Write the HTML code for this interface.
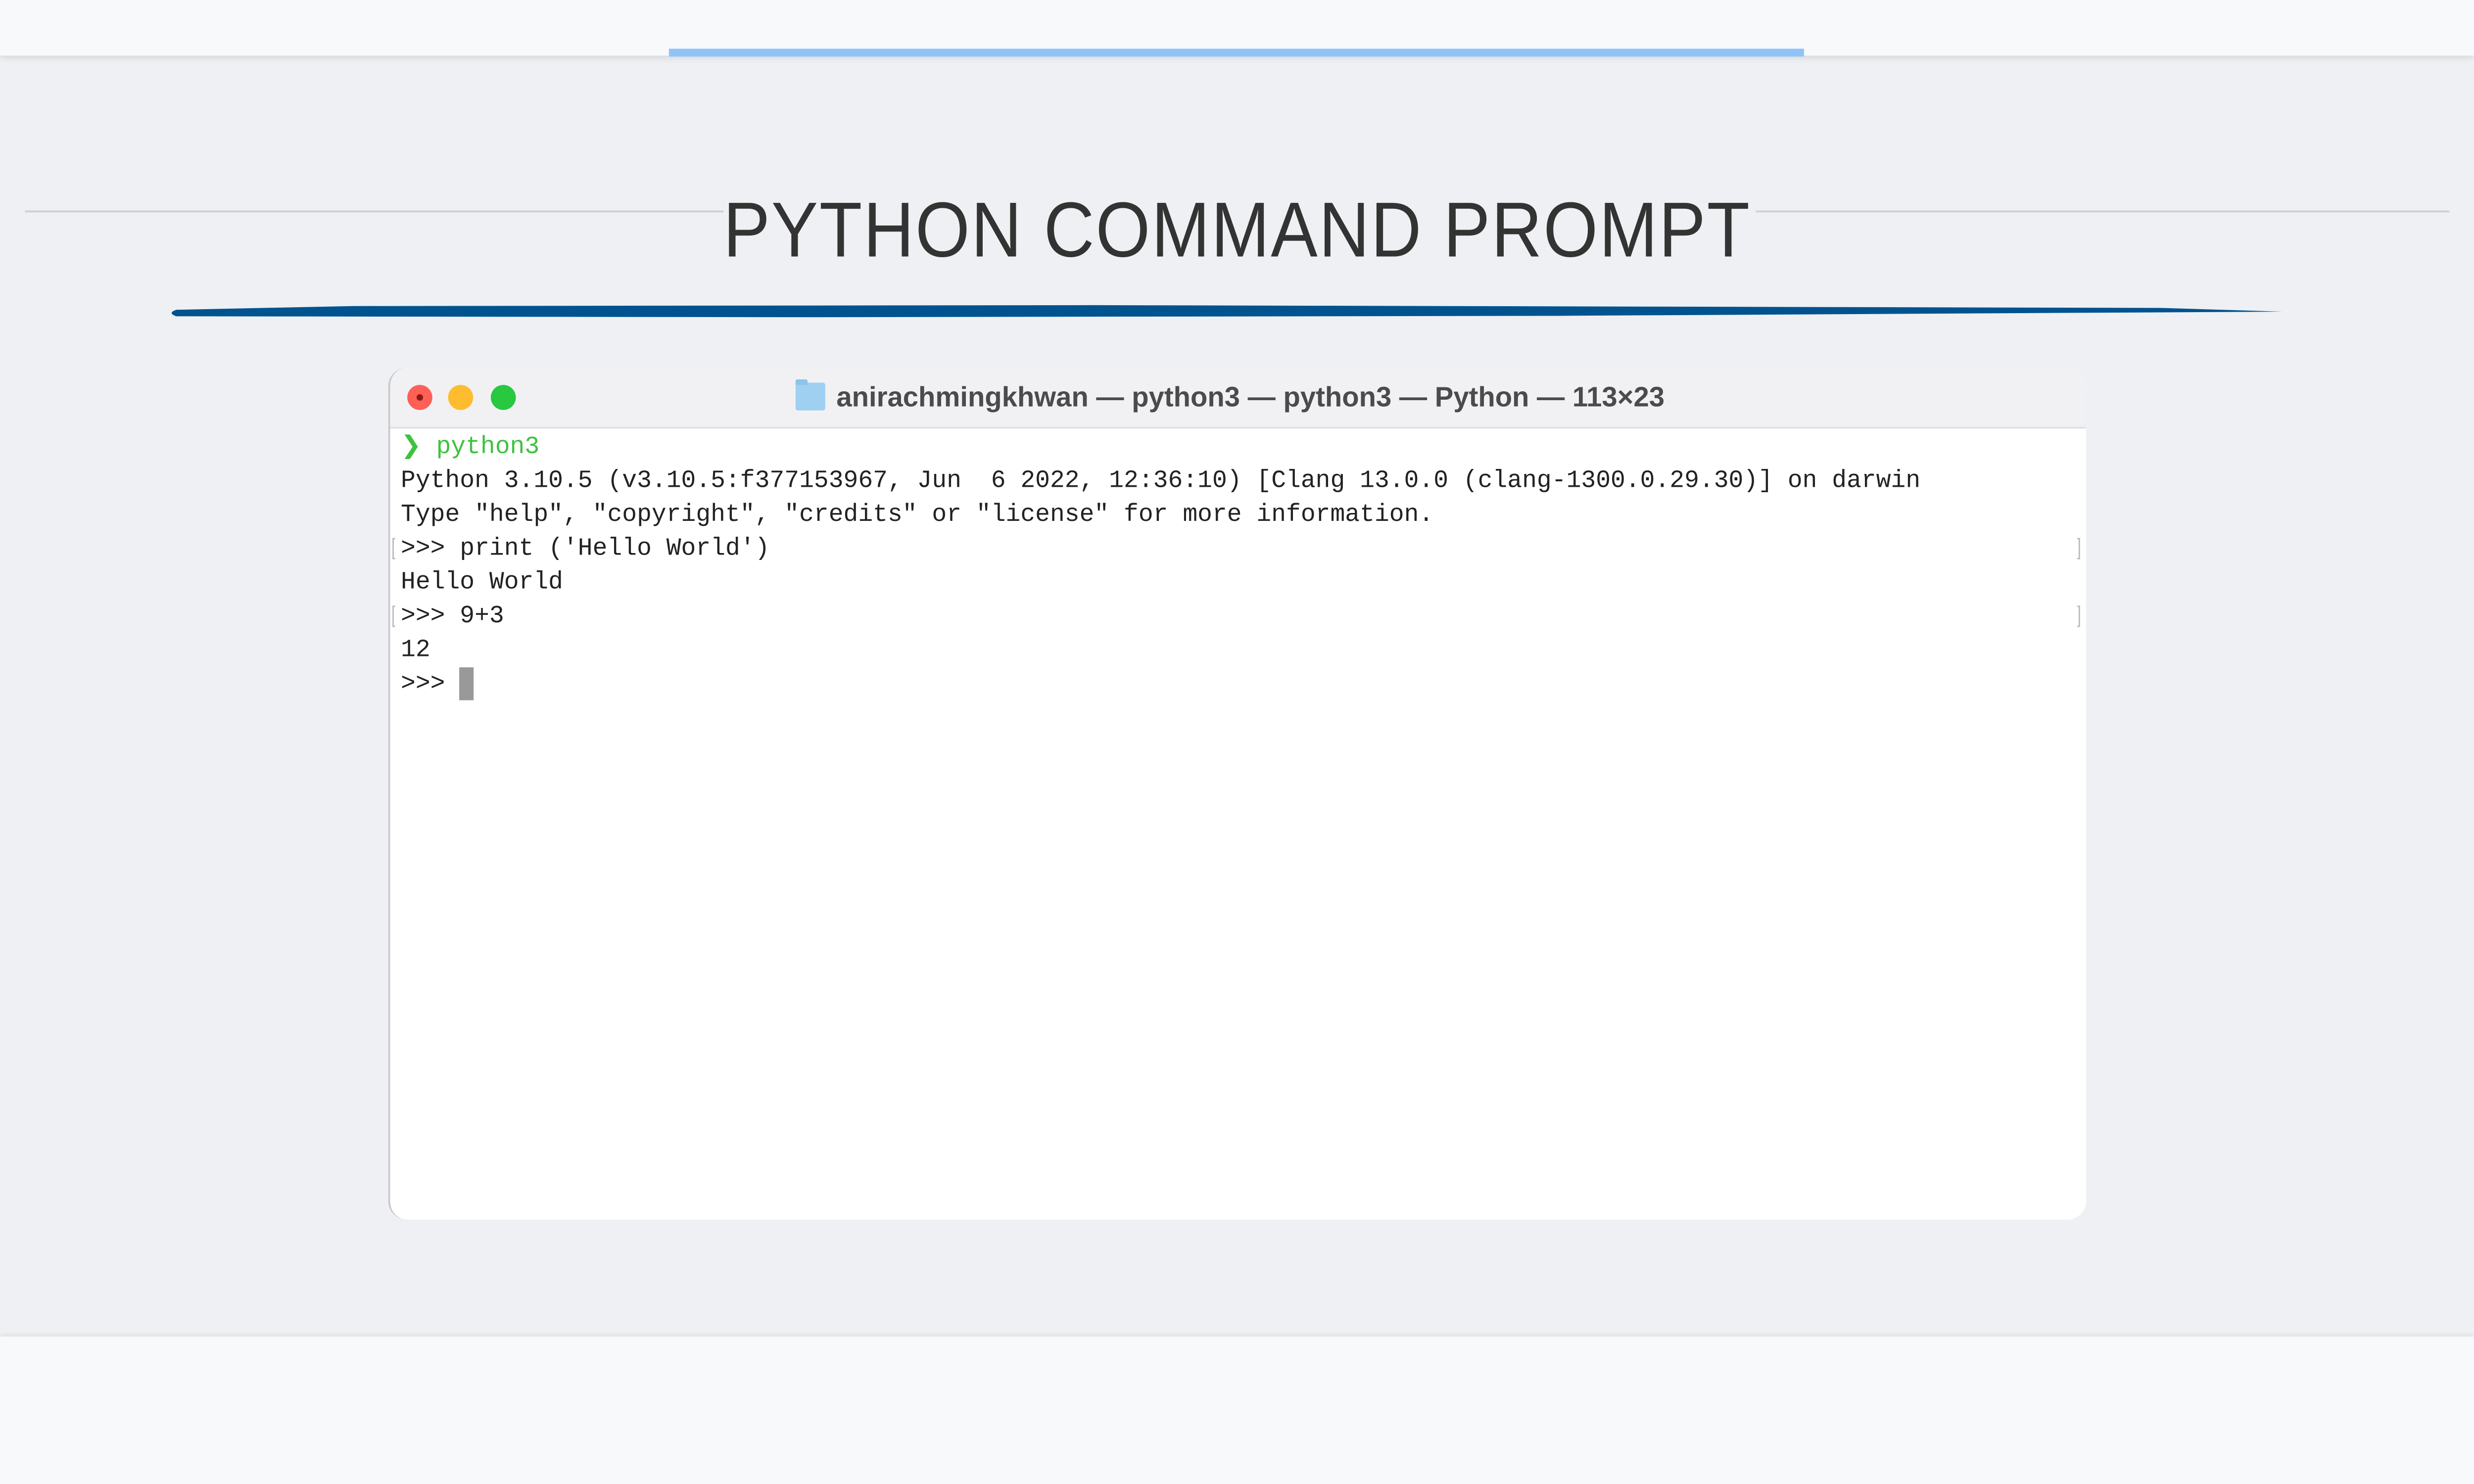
<!DOCTYPE html>
<html><head><meta charset="utf-8"><style>
html,body{margin:0;padding:0;width:5000px;height:3000px;overflow:hidden;background:#f8f9fa}
#w{position:absolute;left:0;top:0;width:5334px;height:3200px;background:#eef0f3;overflow:hidden;transform:scale(0.9375);transform-origin:0 0;font-family:"Liberation Sans",sans-serif}
.top{position:absolute;left:0;top:0;width:5334px;height:120px;background:#f8f9fa;box-shadow:0 4px 14px rgba(0,0,0,0.12)}
.blue{position:absolute;left:1442px;top:105px;width:2447px;height:17px;background:#90c4f8}
.bot{position:absolute;left:0;top:2882px;width:5334px;height:318px;background:#f8f9fa;box-shadow:0 -3px 10px rgba(0,0,0,0.08)}
.hline{position:absolute;left:54px;top:454px;width:5226px;height:4px;background:#cfcfd1}
.tbg{position:absolute;left:1560px;top:400px;width:2225px;height:200px;background:#eef0f3}
.title{position:absolute;left:0;width:5334px;top:395px;text-align:center;white-space:nowrap;line-height:200px;height:200px}
.title span{display:inline-block;font-size:168px;color:#333;letter-spacing:3px;transform:scaleX(0.9);transform-origin:50% 50%}
.term{position:absolute;left:837px;top:793px;width:3660px;height:1837px;background:#fff;border-radius:40px;overflow:hidden;border-left:4px solid #c8c8c8;box-sizing:border-box}
.tb{position:absolute;left:0;top:0;right:0;height:128px;background:#f1f1f3;border-bottom:3px solid #dcdcdc}
.dot{position:absolute;width:54px;height:54px;border-radius:50%}
.txt{position:absolute;left:864px;top:927px;font-family:"Liberation Mono",monospace;font-size:53px;line-height:73px;color:#222;white-space:pre}
.g{color:#3fc23f}
.cur{position:absolute;left:990px;top:1439px;width:31px;height:71px;background:#999}
.br{position:absolute;width:6px;height:46px;border:3px solid #bbb;box-sizing:border-box}
</style></head><body><div id="w">
<div class="top"></div><div class="blue"></div>
<div class="hline"></div>
<div class="tbg"></div>
<div class="title"><span>PYTHON COMMAND PROMPT</span></div>
<svg style="position:absolute;left:360px;top:650px" width="4580" height="45"><path d="M20 18 Q0 25 20 32 L1400 34 L3000 31 L4560 22 L4300 14 L2000 8 L400 10 Z" fill="#00538f"/></svg>
<div class="term"><div class="tb"></div></div>
<div class="dot" style="left:878px;top:830px;background:#fe5f57"></div>
<div style="position:absolute;left:898px;top:850px;width:14px;height:14px;border-radius:50%;background:#8b1a14"></div>
<div class="dot" style="left:966px;top:830px;background:#febc2e"></div>
<div class="dot" style="left:1058px;top:830px;background:#28c840"></div>
<div style="position:absolute;left:1715px;top:825px;width:64px;height:60px;background:#9fd0f2;border-radius:5px"></div>
<div style="position:absolute;left:1715px;top:818px;width:26px;height:12px;background:#8cc4ec;border-radius:4px 4px 0 0"></div>
<div style="position:absolute;left:1803px;top:823px;font-weight:bold;font-size:60px;line-height:66px;color:#4b4b4b;white-space:nowrap">anirachmingkhwan — python3 — python3 — Python — 113×23</div>
<div class="txt"><span class="g">❯ python3</span>
Python 3.10.5 (v3.10.5:f377153967, Jun  6 2022, 12:36:10) [Clang 13.0.0 (clang-1300.0.29.30)] on darwin
Type "help", "copyright", "credits" or "license" for more information.
>>> print ('Hello World')
Hello World
>>> 9+3
12
>>> </div>
<div class="cur"></div>
<div class="br" style="left:846px;top:1160px;border-right:none"></div>
<div class="br" style="left:846px;top:1306px;border-right:none"></div>
<div class="br" style="left:4478px;top:1160px;border-left:none"></div>
<div class="br" style="left:4478px;top:1306px;border-left:none"></div>
<div class="bot"></div>
</div></body></html>
